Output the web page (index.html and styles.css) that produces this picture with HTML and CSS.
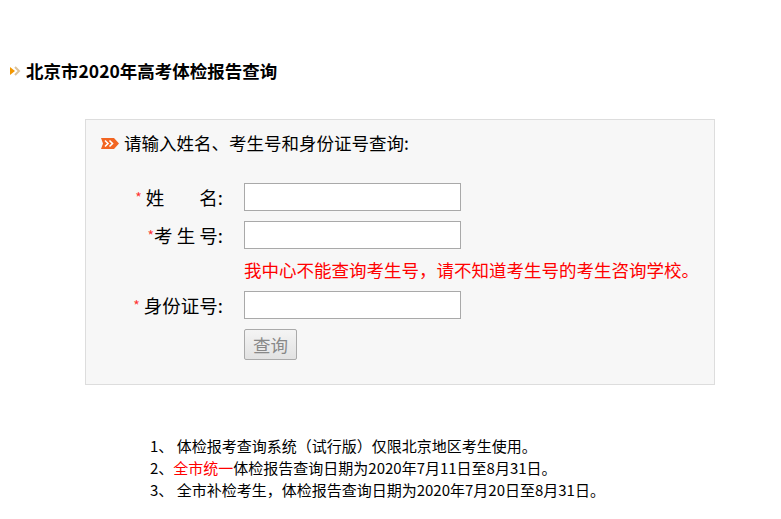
FILE: index.html
```html
<!DOCTYPE html>
<html lang="zh-CN">
<head>
    <meta charset="UTF-8">
    <title>北京市2020年高考体检报告查询</title>
    <link rel="stylesheet" href="styles.css">
</head>
<body>
    <h1 class="page-title">
        <svg class="title-icon" width="11" height="12" viewBox="0 0 11 12">
            <polygon points="0,2 5,6 0,10" fill="#f39800"/>
            <polyline points="5,2 9,6 5,10" fill="none" stroke="#dcc29a" stroke-width="2"/>
        </svg>
        北京市2020年高考体检报告查询
    </h1>

    <div class="query-box">
        <div class="box-head">
            <svg class="head-icon" width="18" height="11" viewBox="0 0 18 11">
                <polygon points="0,0 13,0 18,5.5 13,11 0,11 2,5.5" fill="#f26522"/>
                <polyline points="4,2.5 7,5.5 4,8.5" fill="none" stroke="#fff" stroke-width="1.6"/>
                <polyline points="8.5,2.5 11.5,5.5 8.5,8.5" fill="none" stroke="#fff" stroke-width="1.6"/>
            </svg>
            请输入姓名、考生号和身份证号查询:
        </div>

        <form class="query-form" onsubmit="return false;">
            <label class="field-label"><span class="req">*</span>&nbsp;<span class="justify">姓名</span>:</label>
            <input class="field-input" type="text" name="xm">

            <label class="field-label"><span class="req">*</span>考 生 号:</label>
            <input class="field-input" type="text" name="ksh">

            <div class="field-note">我中心不能查询考生号，请不知道考生号的考生咨询学校。</div>

            <label class="field-label"><span class="req">*</span>&nbsp;身份证号:</label>
            <input class="field-input" type="text" name="sfzh">

            <div class="field-action"><button class="query-btn" type="submit">查询</button></div>
        </form>
    </div>

    <ul class="notes">
        <li>1、 体检报考查询系统（试行版）仅限北京地区考生使用。</li>
        <li>2、<span class="red">全市统一</span>体检报告查询日期为2020年7月11日至8月31日。</li>
        <li>3、 全市补检考生，体检报告查询日期为2020年7月20日至8月31日。</li>
    </ul>
</body>
</html>
```

FILE: styles.css
```css
body {
    margin: 0;
    padding: 0;
    font-family: "Noto Sans CJK SC", "Microsoft YaHei", sans-serif;
    color: #000;
    background: #fff;
}
.page-title {
    display: flex;
    align-items: center;
    margin: 60px 0 0 0;
    padding-left: 10px;
    font-size: 17.5px;
    font-weight: bold;
    line-height: 22px;
}
.title-icon {
    margin-right: 5px;
}
.query-box {
    width: 628px;
    margin: 37px 0 0 85px;
    padding: 11px 0 24px 0;
    background-color: #f7f7f7;
    border: 1px solid #ddd;
}
.box-head {
    display: flex;
    align-items: center;
    padding-left: 15px;
    font-size: 17.5px;
    line-height: 24px;
}
.head-icon {
    margin-right: 5px;
}
.query-form {
    display: grid;
    grid-template-columns: 137px 217px;
    column-gap: 21px;
    row-gap: 10px;
    margin-top: 28px;
    align-items: center;
}
.field-label {
    display: flex;
    justify-content: flex-end;
    align-items: center;
    height: 28px;
    font-size: 18.5px;
    line-height: 28px;
    white-space: pre;
}
.justify {
    display: inline-block;
    width: 72px;
    text-align: justify;
    text-align-last: justify;
}
.req {
    color: #f33;
    font-size: 14px;
    line-height: 1;
}
.field-input {
    box-sizing: border-box;
    width: 217px;
    height: 28px;
    margin: 0;
    border: 1px solid #a9a9a9;
    background: #fff;
}
.field-note {
    grid-column: 2;
    white-space: nowrap;
    color: #f00;
    font-size: 17.5px;
    line-height: 22px;
}
.field-action {
    grid-column: 2;
    height: 31px;
}
.query-btn {
    display: block;
    width: 53px;
    height: 31px;
    padding: 0;
    font-family: inherit;
    font-size: 17.5px;
    color: #888;
    background: linear-gradient(#f4f4f4, #e2e2e2);
    border: 1px solid #aaa;
    border-radius: 2px;
}
.notes {
    list-style: none;
    margin: 50px 0 0 150px;
    padding: 0;
    font-size: 15px;
    line-height: 22px;
}
.red {
    color: #f00;
}
```
